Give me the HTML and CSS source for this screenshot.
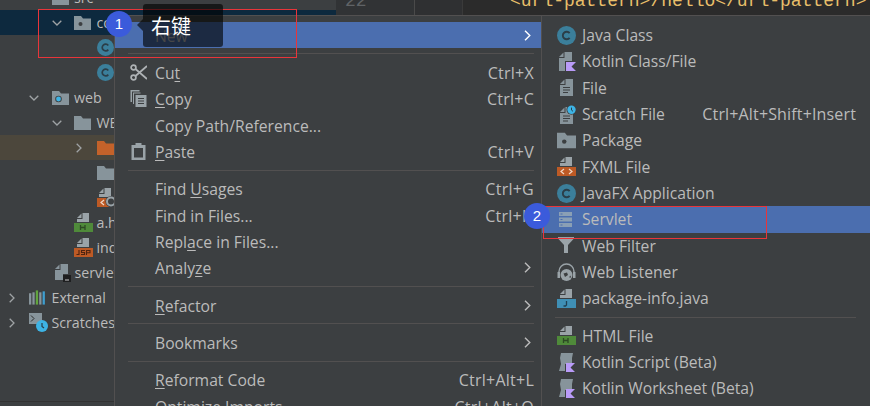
FILE: index.html
```html
<!DOCTYPE html>
<html lang="en">
<head>
<meta charset="utf-8">
<title>New menu</title>
<link rel="stylesheet" href="styles.css">
</head>
<body>
<svg class="defs" width="0" height="0" aria-hidden="true">
  <symbol id="i-class" viewBox="0 0 17 17"><circle cx="8.5" cy="8.5" r="8.5" fill="#3b7f9b"/><path d="M11.3 6.4A3.4 3.4 0 1 0 11.3 10.6" fill="none" stroke="#2b3e48" stroke-width="1.7"/></symbol>
  <symbol id="i-folder" viewBox="0 0 17 14"><path d="M0 0H7L9 2.500H17V14H0Z" fill="#87949b"/></symbol>
  <symbol id="i-package" viewBox="0 0 17 14"><path d="M0 0H7L9 2.500H17V14H0Z" fill="#87949b"/><circle cx="6.500" cy="8" r="2" fill="#3c3f41"/></symbol>
  <symbol id="i-web" viewBox="0 0 17 14"><path d="M0 0H7L9 2.500H17V14H0Z" fill="#87949b"/><circle cx="6.500" cy="8" r="3.300" fill="#3c3f41"/><circle cx="6.500" cy="8" r="2.400" fill="#3db4e6"/></symbol>
  <symbol id="i-orange" viewBox="0 0 17 14"><path d="M0 0H7L9 2.500H17V14H0Z" fill="#c4622a"/></symbol>
  <symbol id="i-html" viewBox="0 0 19 19"><path d="M8.500 0H15V9H3V6H8.500Z" fill="#9aa3a8"/><path d="M7.500 0.500V5H3Z" fill="#9aa3a8"/><rect y="10" width="19" height="9" fill="#4f8a3a"/><path d="M6.500 12V17M6.500 14.500H11M11 12V17" stroke="#2d4a24" stroke-width="1.300" fill="none"/></symbol>
  <symbol id="i-jsp" viewBox="0 0 19 19"><path d="M8.500 0H15V9H3V6H8.500Z" fill="#9aa3a8"/><path d="M7.500 0.500V5H3Z" fill="#9aa3a8"/><rect y="10" width="19" height="9" fill="#bd5a25"/><path d="M5 12V16.500H2.500M11 12.500H7.500V14.500H10.500V16.500H7M12.500 17V12.500H16V14.800H12.500" stroke="#4f2410" stroke-width="1.100" fill="none"/></symbol>
  <symbol id="i-xml" viewBox="0 0 19 19"><path d="M8.500 0H15V9H3V6H8.500Z" fill="#9aa3a8"/><path d="M7.500 0.500V5H3Z" fill="#9aa3a8"/><rect y="10" width="19" height="9" fill="#bd5a25"/><path d="M7 12L4 14.500L7 17M12 12L15 14.500L12 17" stroke="#f0d8c8" stroke-width="1.200" fill="none"/></symbol>
  <symbol id="i-xmlweb" viewBox="0 0 19 19"><path d="M7.500 0H14V9H2V6H7.500Z" fill="#9aa3a8"/><path d="M6.500 0.500V5H2Z" fill="#9aa3a8"/><rect y="10" width="12" height="9" fill="#bd5a25"/><path d="M7 12L4 14.500L7 17" stroke="#f0d8c8" stroke-width="1.200" fill="none"/><circle cx="14" cy="13.500" r="5.500" fill="#3c3f41"/><circle cx="14" cy="13.500" r="4" fill="none" stroke="#9aa3a8" stroke-width="2"/></symbol>
  <symbol id="i-java" viewBox="0 0 19 19"><path d="M8.500 0H15V9H3V6H8.500Z" fill="#9aa3a8"/><path d="M7.500 0.500V5H3Z" fill="#9aa3a8"/><rect y="10" width="19" height="9" fill="#3f8fb5"/><path d="M9.500 12V16L8.500 17H6.500" stroke="#1f3f52" stroke-width="1.300" fill="none"/></symbol>
  <symbol id="i-iml" viewBox="0 0 16 18"><path d="M5.500 0H13V10H8V16H0V6H5.500Z" fill="#87949b"/><path d="M4.500 0.500V5H0Z" fill="#87949b"/><rect x="8" y="11" width="8" height="7" fill="#1e1f20"/><rect x="10" y="15.500" width="4" height="1" fill="#c8c8c8"/></symbol>
  <symbol id="i-file" viewBox="-3 -1 19 19"><path d="M5.500 0H13V17H0V6H5.500Z" fill="#87949b"/><path d="M4.500 0.500V5H0Z" fill="#87949b"/><path d="M3 8.500H10M3 11H10M3 13.500H8" stroke="#3c3f41" stroke-width="1.200"/></symbol>
  <symbol id="i-kfile" viewBox="-2 0 19 19"><path d="M5.500 0H13V9H6V19H0V6H5.500Z" fill="#87949b"/><path d="M4.500 0.500V5H0Z" fill="#87949b"/><path d="M7 10H17L12.500 14.500L17 19H7Z" fill="#b99bf8"/></symbol>
  <symbol id="i-kscript" viewBox="0 0 19 19"><path d="M4 0H16L15 5V11H8V18H2L4 11L3 5Z" fill="#87949b"/><path d="M9 10H18L13.500 14.500L18 19H9Z" fill="#b99bf8"/></symbol>
  <symbol id="i-scratch" viewBox="-3 0 19 19"><path d="M5.500 2H13V19H0V8H5.500Z" fill="#87949b"/><path d="M4.500 2.500V7H0Z" fill="#87949b"/><path d="M3 11H10M3 13.500H10M3 16H8" stroke="#3c3f41" stroke-width="1.200"/><circle cx="11.500" cy="4.800" r="5" fill="#3c3f41"/><circle cx="11.500" cy="4.800" r="4.200" fill="#3db4e6"/><path d="M11.500 2.600V5.100L13 6.300" stroke="#2b3e48" fill="none"/></symbol>
  <symbol id="i-servlet" viewBox="-2 -2 19 19"><path d="M0 0H13V4H0ZM0 5.500H13V9.500H0ZM0 11H13V15H0Z" fill="#8a9fb5"/><path d="M1.500 2H3.500M1.500 7.500H3.500M1.500 13H3.500" stroke="#4b6eaf" stroke-width="1.200"/></symbol>
  <symbol id="i-filter" viewBox="0 -1 19 19"><path d="M1 0H17V1.500L11 8V16H7V8L1 1.500Z" fill="#9aa3a8"/></symbol>
  <symbol id="i-listener" viewBox="0 0 19 19"><path d="M2 11V8.500A7.500 7.500 0 0 1 17 8.500V11" fill="none" stroke="#9aa3a8" stroke-width="1.400"/><rect x="0.500" y="9" width="2.500" height="6" fill="#9aa3a8"/><rect x="16" y="9" width="2.500" height="6" fill="#9aa3a8"/><circle cx="9.500" cy="12" r="6" fill="#9aa3a8"/><path d="M6.500 10.500L10 9.500L11 12L8 14ZM12 14L14 12.500L13.500 15Z" fill="#3c3f41"/></symbol>
  <symbol id="i-ext" viewBox="0 0 18 15"><rect y="3" width="2.400" height="12" fill="#87949b"/><rect x="3.600" y="2" width="2.400" height="13" fill="#87949b"/><rect x="7.200" y="0" width="2.400" height="15" fill="#62a53f"/><rect x="10.800" y="2" width="2.400" height="13" fill="#87949b"/><rect x="14.400" y="1" width="2.400" height="14" fill="#3f9fd0"/></symbol>
  <symbol id="i-scratches" viewBox="0 0 19 19"><path d="M0 0H13V11H0Z" fill="#87949b"/><path d="M2 2.500L5 5.500L2 8.500" stroke="#2b2b2b" fill="none"/><circle cx="13" cy="13" r="6" fill="#3db4e6"/><path d="M13 10V13.500L15 15" stroke="#2b3e48" fill="none" stroke-width="1.200"/></symbol>
  <symbol id="i-cut" viewBox="0 0 17 17"><circle cx="3.500" cy="3.500" r="2.400" fill="none" stroke="#aeb2b5" stroke-width="1.700"/><circle cx="3.500" cy="13.500" r="2.400" fill="none" stroke="#aeb2b5" stroke-width="1.700"/><path d="M5.500 5L17 15M5.500 12L17 2" stroke="#aeb2b5" stroke-width="1.700"/></symbol>
  <symbol id="i-copy" viewBox="0 0 16 17"><path d="M0 0H9V1.500H1.500V12H0Z" fill="#9aa3a8"/><path d="M2.500 2.500H10V3.500H3.500V14H2.500Z" fill="#9aa3a8"/><path d="M5 5H16V17H5Z" fill="#9aa3a8"/><path d="M7.500 8.500H13.500M7.500 11H13.500M7.500 13.500H13.500" stroke="#3c3f41" stroke-width="1.200"/></symbol>
  <symbol id="i-paste" viewBox="0 0 14 17"><path d="M0 2H4V0H10V2H14V17H0Z" fill="#9aa3a8"/><rect x="2.500" y="5" width="9" height="9.500" fill="#3c3f41"/></symbol>
  <symbol id="i-down" viewBox="0 0 10 6"><path d="M.7 .7L5 5L9.300 .7" fill="none" stroke="#9fa3a5" stroke-width="1.300"/></symbol>
  <symbol id="i-right" viewBox="0 0 6 10"><path d="M.7 .7L5 5L.7 9.300" fill="none" stroke="#9fa3a5" stroke-width="1.300"/></symbol>
  <symbol id="i-sub" viewBox="0 0 7 11"><path d="M1 .7L5.800 5.500L1 10.300" fill="none" stroke="currentColor" stroke-width="1.400"/></symbol>
</svg>

<div class="ide">
  <aside class="tree">
    <div class="tree-clip">
      <div class="node d1"><span class="twist"></span><svg class="ti f"><use href="#i-folder"/></svg><span>src</span></div>
      <div class="node d2 selected"><span class="twist"><svg class="arrow-d"><use href="#i-down"/></svg></span><svg class="ti f"><use href="#i-package"/></svg><span>com.servlet</span></div>
      <div class="node d3"><span class="twist"></span><svg class="ti c"><use href="#i-class"/></svg><span>Hello</span></div>
      <div class="node d3"><span class="twist"></span><svg class="ti c"><use href="#i-class"/></svg><span>Demo</span></div>
      <div class="node d1"><span class="twist"><svg class="arrow-d"><use href="#i-down"/></svg></span><svg class="ti f"><use href="#i-web"/></svg><span>web</span></div>
      <div class="node d2"><span class="twist"><svg class="arrow-d"><use href="#i-down"/></svg></span><svg class="ti f"><use href="#i-folder"/></svg><span>WEB-INF</span></div>
      <div class="node d3 excluded"><span class="twist"><svg class="arrow-r"><use href="#i-right"/></svg></span><svg class="ti f"><use href="#i-orange"/></svg><span>classes</span></div>
      <div class="node d3"><span class="twist"></span><svg class="ti f"><use href="#i-folder"/></svg><span>lib</span></div>
      <div class="node d3"><span class="twist"></span><svg class="ti b"><use href="#i-xmlweb"/></svg><span>web.xml</span></div>
      <div class="node d2"><span class="twist"></span><svg class="ti b"><use href="#i-html"/></svg><span>a.html</span></div>
      <div class="node d2"><span class="twist"></span><svg class="ti b"><use href="#i-jsp"/></svg><span>index.jsp</span></div>
      <div class="node d1"><span class="twist"></span><svg class="ti iml"><use href="#i-iml"/></svg><span>servlet.iml</span></div>
      <div class="node d0"><span class="twist"><svg class="arrow-r"><use href="#i-right"/></svg></span><svg class="ti f tall"><use href="#i-ext"/></svg><span>External Libraries</span></div>
      <div class="node d0"><span class="twist"><svg class="arrow-r"><use href="#i-right"/></svg></span><svg class="ti s"><use href="#i-scratches"/></svg><span>Scratches and Consoles</span></div>
    </div>
  </aside>
  <main class="editor">
    <div class="gutter"><span class="lineno">22</span></div>
    <div class="fold"></div>
    <div class="code">&lt;url-pattern&gt;/hello&lt;/url-pattern&gt;</div>
  </main>
</div>

<div class="menus">
  <nav class="menu main-menu">
    <div class="item active"><span class="ic"></span><span class="label">New</span><svg class="sub"><use href="#i-sub"/></svg></div>
    <div class="sep"></div>
    <div class="item"><span class="ic"><svg class="mi"><use href="#i-cut"/></svg></span><span class="label">Cu<u>t</u></span><span class="key">Ctrl+X</span></div>
    <div class="item"><span class="ic"><svg class="mi"><use href="#i-copy"/></svg></span><span class="label"><u>C</u>opy</span><span class="key">Ctrl+C</span></div>
    <div class="item"><span class="ic"></span><span class="label">Copy Path/Reference...</span></div>
    <div class="item"><span class="ic"><svg class="mi"><use href="#i-paste"/></svg></span><span class="label"><u>P</u>aste</span><span class="key">Ctrl+V</span></div>
    <div class="sep"></div>
    <div class="item"><span class="ic"></span><span class="label">Find <u>U</u>sages</span><span class="key">Ctrl+G</span></div>
    <div class="item"><span class="ic"></span><span class="label">Find in Files...</span><span class="key">Ctrl+H</span></div>
    <div class="item"><span class="ic"></span><span class="label">Repl<u>a</u>ce in Files...</span></div>
    <div class="item"><span class="ic"></span><span class="label">Analy<u>z</u>e</span><svg class="sub"><use href="#i-sub"/></svg></div>
    <div class="sep"></div>
    <div class="item"><span class="ic"></span><span class="label"><u>R</u>efactor</span><svg class="sub"><use href="#i-sub"/></svg></div>
    <div class="sep"></div>
    <div class="item"><span class="ic"></span><span class="label">Bookmarks</span><svg class="sub"><use href="#i-sub"/></svg></div>
    <div class="sep"></div>
    <div class="item"><span class="ic"></span><span class="label"><u>R</u>eformat Code</span><span class="key">Ctrl+Alt+L</span></div>
    <div class="item"><span class="ic"></span><span class="label">Optimi<u>z</u>e Imports</span><span class="key">Ctrl+Alt+O</span></div>
  </nav>
  <nav class="menu sub-menu">
    <div class="item"><span class="ic"><svg class="si"><use href="#i-class"/></svg></span><span class="label">Java Class</span></div>
    <div class="item"><span class="ic"><svg class="si"><use href="#i-kfile"/></svg></span><span class="label">Kotlin Class/File</span></div>
    <div class="item"><span class="ic"><svg class="si"><use href="#i-file"/></svg></span><span class="label">File</span></div>
    <div class="item"><span class="ic"><svg class="si"><use href="#i-scratch"/></svg></span><span class="label">Scratch File</span><span class="key">Ctrl+Alt+Shift+Insert</span></div>
    <div class="item"><span class="ic"><svg class="si"><use href="#i-package"/></svg></span><span class="label">Package</span></div>
    <div class="item"><span class="ic"><svg class="si"><use href="#i-xml"/></svg></span><span class="label">FXML File</span></div>
    <div class="item"><span class="ic"><svg class="si"><use href="#i-class"/></svg></span><span class="label">JavaFX Application</span></div>
    <div class="item active"><span class="ic"><svg class="si"><use href="#i-servlet"/></svg></span><span class="label">Servlet</span></div>
    <div class="item"><span class="ic"><svg class="si"><use href="#i-filter"/></svg></span><span class="label">Web Filter</span></div>
    <div class="item"><span class="ic"><svg class="si"><use href="#i-listener"/></svg></span><span class="label">Web Listener</span></div>
    <div class="item"><span class="ic"><svg class="si"><use href="#i-java"/></svg></span><span class="label">package-info.java</span></div>
    <div class="sep"></div>
    <div class="item"><span class="ic"><svg class="si"><use href="#i-html"/></svg></span><span class="label">HTML File</span></div>
    <div class="item"><span class="ic"><svg class="si"><use href="#i-kscript"/></svg></span><span class="label">Kotlin Script (Beta)</span></div>
    <div class="item"><span class="ic"><svg class="si"><use href="#i-kscript"/></svg></span><span class="label">Kotlin Worksheet (Beta)</span></div>
    <div class="item"><span class="ic"><svg class="si"><use href="#i-file"/></svg></span><span class="label">JavaScript File</span></div>
  </nav>
</div>

<div class="mark mark-one"></div>
<div class="mark mark-two"></div>
<div class="step step-one">1</div>
<div class="step step-two">2</div>
<div class="tip">右键</div>
</body>
</html>
```

FILE: styles.css
```css
* { box-sizing: border-box; }
html, body { margin: 0; padding: 0; }
body {
  position: relative;
  width: 870px;
  height: 406px;
  overflow: hidden;
  background: #3c3f41;
  color: #bbbbbb;
  font-family: "Open Sans", "Noto Sans", sans-serif;
  font-size: 15.7px;
}
.defs { position: absolute; }

.ide { display: flex; height: 406px; }

.tree { width: 336px; flex: none; overflow: hidden; font-size: 14.2px; word-spacing: 5px; }
.tree-clip { margin-top: -15px; height: 417px; border-bottom: 1px solid #323232; }
.node { display: flex; align-items: center; height: 25px; white-space: nowrap; }
.node.selected { background: #0d293e; }
.node.excluded { background: #4c473c; }
.node.d0 { padding-left: 0; }
.node.d1 { padding-left: 22.5px; }
.node.d2 { padding-left: 45px; }
.node.d3 { padding-left: 67.5px; }
.twist { width: 23px; height: 25px; flex: none; display: flex; align-items: center; justify-content: center; margin-right: 6px; }
.arrow-d { width: 10px; height: 6px; }
.arrow-r { width: 6px; height: 10px; }
.ti { flex: none; margin-right: 5.5px; }
.ti.f { width: 17px; height: 14px; }
.ti.f.tall { height: 15px; }
.ti.c { width: 17px; height: 17px; }
.ti.s { width: 19px; height: 19px; margin-right: 3.5px; }
.ti.b { width: 19px; height: 19px; margin-right: 3.5px; }
.ti.iml { width: 16px; height: 18px; margin-left: 3px; margin-right: 4px; }

.editor { flex: 1; display: flex; height: 15px; overflow: hidden; background: #2b2b2b; }
.gutter { width: 79px; flex: none; background: #313335; border-right: 1px solid #4a4a4a; padding-left: 9px; color: #606366; font: 18px/16px "Liberation Mono", monospace; }
.lineno { display: block; margin-top: -7px; }
.fold { width: 48px; flex: none; background: #2f3032; border-right: 1px solid #3a3a3a; }
.code { padding-left: 47px; margin-top: -12px; color: #e8bf6a; font: 18px/26px "Liberation Mono", monospace; white-space: nowrap; }

.menus { position: absolute; left: 114px; top: 15px; width: 756px; height: 391px; display: flex; overflow: hidden; }
.menu { background: #3c3f41; border: 1px solid #525050; border-bottom: 0; padding-top: 6px; }
.main-menu { width: 427px; flex: none; border-right: 0; }
.sub-menu { flex: 1; border-right: 0; }
.item { display: flex; align-items: center; height: 26.33px; white-space: nowrap; line-height: 26px; }
.item.active { background: #4b6eaf; }
.main-menu .item { padding-right: 7px; }
.main-menu .ic { width: 40px; padding-left: 15px; flex: none; display: flex; align-items: center; }
.sub-menu .item { padding-right: 14px; }
.sub-menu .ic { width: 40px; padding-left: 15px; flex: none; display: flex; align-items: center; justify-content: flex-start; }
.mi { width: 17px; height: 17px; flex: none; }
.si { width: 19px; height: 19px; flex: none; }
.label { flex: 1; }
.main-menu .label { padding-top: 1px; }
.label u { text-underline-offset: 2px; }
.key { flex: none; font-size: 16px; letter-spacing: 0.15px; }
.main-menu .key { padding-top: 1px; letter-spacing: 0.25px; }
.sub { width: 7px; height: 11px; color: #bbbbbb; margin-right: 3px; flex: none; }
.active .sub { color: #ffffff; }
.main-menu .sep { margin: 5px 7px 5px 13px; }
.sep { height: 1px; margin: 5px 14px 5px 13px; background: #525050; }

.mark { position: absolute; border: 1px solid #e8353a; }
.mark-one { left: 38px; top: 9px; width: 259px; height: 49px; }
.mark-two { left: 543px; top: 206px; width: 224px; height: 33px; }

.step {
  position: absolute;
  width: 26px;
  height: 26px;
  border-radius: 50%;
  background: #3b5bdb;
  color: #ffffff;
  font: 15px/26px "Liberation Sans", sans-serif;
  text-align: center;
}
.step-one { left: 106px; top: 11px; }
.step-two { left: 524px; top: 203px; }

.tip {
  position: absolute;
  left: 143px;
  top: 4px;
  width: 80px;
  height: 43px;
  border-radius: 3px;
  background: rgba(0, 0, 0, 0.62);
  color: #ffffff;
  font: 20px/43px "Noto Sans CJK SC", sans-serif;
  padding-left: 8px;
}
.tip::before {
  content: "";
  position: absolute;
  left: -6px;
  top: 15px;
  border-style: solid;
  border-width: 6px 6px 6px 0;
  border-color: transparent rgba(0, 0, 0, 0.62) transparent transparent;
}
```
